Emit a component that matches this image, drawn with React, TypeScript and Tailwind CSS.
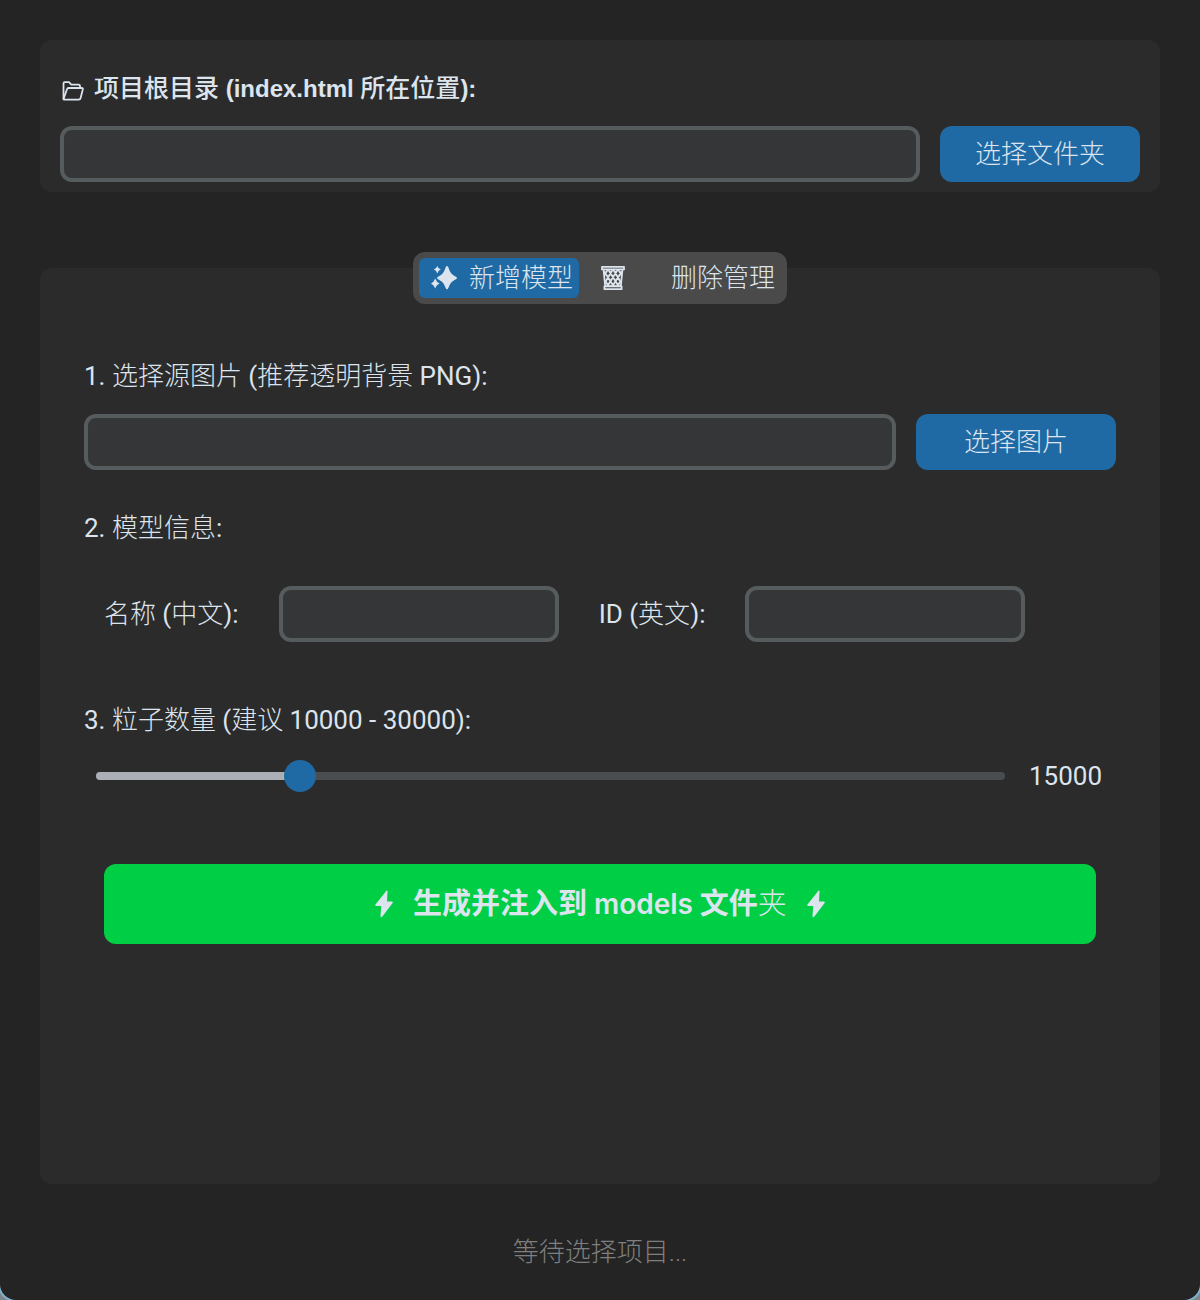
import { useState } from "react";

const MIN_COUNT = 5000;
const MAX_COUNT = 50000;

const inputClass =
  "h-14 min-w-0 rounded-xl border-4 border-[#565b5e] bg-[#343638] px-3 text-[#dce4ee] outline-none";
const buttonClass =
  "h-14 w-50 shrink-0 rounded-xl bg-[#1f6aa5] font-light hover:bg-[#144870]";

function FolderIcon() {
  return (
    <svg
      width="22"
      height="20"
      viewBox="0 0 22 20"
      fill="none"
      stroke="currentColor"
      strokeWidth="1.8"
      strokeLinejoin="round"
      aria-hidden="true"
    >
      <path d="M1.5 18V2.5Q1.5 1.2 2.8 1.2H7L9.3 3.6H16.5Q18 3.6 18 5V7" />
      <path d="M1.5 18L5 8.2Q5.4 7 6.6 7H19.6Q21.2 7 20.8 8.4L18.6 17Q18.2 18.6 16.8 18.6H2.4Q1.5 18.6 1.5 18Z" />
    </svg>
  );
}

function SparklesIcon() {
  return (
    <svg width="26" height="26" viewBox="0 0 26 26" fill="currentColor" aria-hidden="true">
      <path d="M16 1Q17 1 17.8 3.4Q19.4 8.8 23.6 11Q26 12.2 26 13Q26 13.8 23.6 15Q19.4 17.2 17.8 22Q17 24.4 16 24.4Q15 24.4 14.2 22Q12.6 17.2 8.4 15Q6 13.8 6 13Q6 12.2 8.4 11Q12.6 8.8 14.2 3.4Q15 1 16 1Z" />
      <path d="M6.3 1Q7.3 3.9 9.8 4.6Q7.3 5.4 6.3 8.4Q5.3 5.4 2.8 4.6Q5.3 3.9 6.3 1Z" />
      <path d="M4.2 13.6Q5.4 17.2 8.6 18.4Q5.4 19.6 4.2 23.6Q3 19.6 0 18.4Q3 17.2 4.2 13.6Z" />
    </svg>
  );
}

function TrashIcon() {
  return (
    <svg
      width="24"
      height="26"
      viewBox="0 0 24 26"
      fill="none"
      stroke="currentColor"
      strokeWidth="1.8"
      strokeLinejoin="round"
      aria-hidden="true"
    >
      <path d="M1 1.8H23V4.4H1Z" />
      <path d="M2.6 5L4.2 21.2H19.8L21.4 5" />
      <path d="M3.4 21.4V24.2H20.6V21.4Z" />
      <path
        strokeWidth="1.8"
        d="M3.5 10L6.5 5M4 17.5L11.5 5M6.5 21L16.5 5M11.5 21L20.8 6.5M16.5 21L20 15.5M20.5 10L17.5 5M20 17.5L12.5 5M17.5 21L7.5 5M12.5 21L3.2 6.5M7.5 21L4 15.5"
      />
    </svg>
  );
}

function BoltIcon() {
  return (
    <svg width="18" height="28" viewBox="0 0 18 28" fill="currentColor" aria-hidden="true">
      <path d="M11.6 0.6Q12.8 0 12.5 1.4L12 11.6H16.8Q18.4 11.6 17.6 13L7.4 26.6Q5.4 28.4 5.5 26L6.2 16H1.2Q-0.4 16 0.5 14.4Z" />
    </svg>
  );
}

export default function App() {
  const [root, setRoot] = useState("");
  const [image, setImage] = useState("");
  const [name, setName] = useState("");
  const [modelId, setModelId] = useState("");
  const [count, setCount] = useState(15000);
  const [tab, setTab] = useState("add");

  const percent = ((count - MIN_COUNT) / (MAX_COUNT - MIN_COUNT)) * 100;

  return (
    <div className="bg-[#7f8588]">
      <main className="flex min-h-screen flex-col rounded-b-2xl bg-[#242424] px-10 pt-10 pb-7 font-['Roboto','Noto_Sans_CJK_SC',sans-serif] text-[26px] leading-10 text-[#dce4ee] shadow-[0_0_0_2px_#7fb2cf]">
        {/* Project root */}
        <section className="rounded-xl bg-[#2b2b2b] px-5 pt-7 pb-2.5">
          <label
            htmlFor="root"
            className="flex h-10 items-center gap-2.5 pl-0.5 font-['Liberation_Sans','Noto_Sans_CJK_SC',sans-serif] text-2xl leading-10 font-bold"
          >
            <span className="pt-1.5">
              <FolderIcon />
            </span>
            <span>
              <span className="text-[25px] font-medium">项目根目录</span> (index.html{" "}
              <span className="text-[25px] font-medium">所在位置</span>):
            </span>
          </label>
          <div className="mt-4.5 flex gap-5">
            <input
              id="root"
              type="text"
              value={root}
              onChange={(e) => setRoot(e.target.value)}
              className={`${inputClass} flex-1`}
            />
            <button type="button" className={buttonClass}>
              选择文件夹
            </button>
          </div>
        </section>

        <section className="mt-19 flex flex-1 flex-col rounded-xl bg-[#2b2b2b] px-11">
          {/* Tabs */}
          <div role="tablist" className="-mt-4 flex self-center rounded-xl bg-[#4a4a4a] p-1.5 font-light">
            <button
              type="button"
              role="tab"
              aria-selected={tab === "add"}
              onClick={() => setTab("add")}
              className={`flex h-10 items-center gap-3 rounded-md pr-1.5 pl-3 ${tab === "add" ? "bg-[#1f6aa5]" : ""}`}
            >
              <SparklesIcon />
              新增模型
            </button>
            <button
              type="button"
              role="tab"
              aria-selected={tab === "delete"}
              onClick={() => setTab("delete")}
              className={`flex h-10 items-center gap-11.5 rounded-md pr-1.5 pl-5.5 ${tab === "delete" ? "bg-[#1f6aa5]" : ""}`}
            >
              <TrashIcon />
              删除管理
            </button>
          </div>

          {/* Source image */}
          <label htmlFor="image" className="mt-13 font-light">
            <span className="font-normal">1. </span>选择源图片 <span className="font-normal">(</span>推荐透明背景{" "}
            <span className="font-normal">PNG):</span>
          </label>
          <div className="mt-4.5 flex gap-5">
            <input
              id="image"
              type="text"
              value={image}
              onChange={(e) => setImage(e.target.value)}
              className={`${inputClass} flex-1`}
            />
            <button type="button" className={buttonClass}>
              选择图片
            </button>
          </div>

          {/* Model info */}
          <h2 className="mt-9.5 font-light">
            <span className="font-normal">2. </span>模型信息<span className="font-normal">:</span>
          </h2>
          <div className="mt-9.5 flex items-center gap-10 pl-5">
            <label htmlFor="name" className="font-light">
              名称 <span className="font-normal">(</span>中文<span className="font-normal">):</span>
            </label>
            <input
              id="name"
              type="text"
              value={name}
              onChange={(e) => setName(e.target.value)}
              className={`${inputClass} w-70`}
            />
            <label htmlFor="model-id" className="font-light">
              <span className="font-normal">ID (</span>英文<span className="font-normal">):</span>
            </label>
            <input
              id="model-id"
              type="text"
              value={modelId}
              onChange={(e) => setModelId(e.target.value)}
              className={`${inputClass} w-70`}
            />
          </div>

          {/* Particle count */}
          <label htmlFor="count" className="mt-14.5 font-light">
            <span className="font-normal">3. </span>粒子数量 <span className="font-normal">(</span>建议{" "}
            <span className="font-normal">10000 - 30000):</span>
          </label>
          <div className="mt-5 flex items-center gap-3 pr-3.5">
            <div className="grid flex-1 items-center">
              <div className="col-start-1 row-start-1 mx-3 h-2 overflow-hidden rounded-sm bg-[#4a4d50]">
                <div className="h-full bg-[#aab0b5]" style={{ width: `${percent}%` }} />
              </div>
              <input
                id="count"
                type="range"
                min={MIN_COUNT}
                max={MAX_COUNT}
                step={1000}
                value={count}
                onChange={(e) => setCount(Number(e.target.value))}
                className="col-start-1 row-start-1 h-8 w-full appearance-none bg-transparent [&::-webkit-slider-thumb]:size-8 [&::-webkit-slider-thumb]:appearance-none [&::-webkit-slider-thumb]:rounded-full [&::-webkit-slider-thumb]:bg-[#1f6aa5]"
              />
            </div>
            <output htmlFor="count" className="leading-8">
              {count}
            </output>
          </div>

          <button
            type="button"
            className="mx-5 mt-18 flex h-20 items-center justify-center gap-5 rounded-xl bg-[#00ce44] font-['Inter','Noto_Sans_CJK_SC',sans-serif] text-[29px] font-bold hover:bg-[#00a837]"
          >
            <BoltIcon />
            <span>
              生成并注入到 <span className="text-[28px] font-semibold">models</span> 文件
              <span className="font-light">夹</span>
            </span>
            <BoltIcon />
          </button>
        </section>

        <p className="mt-12 text-center font-light text-[#7f7f7f]">等待选择项目...</p>
      </main>
    </div>
  );
}
